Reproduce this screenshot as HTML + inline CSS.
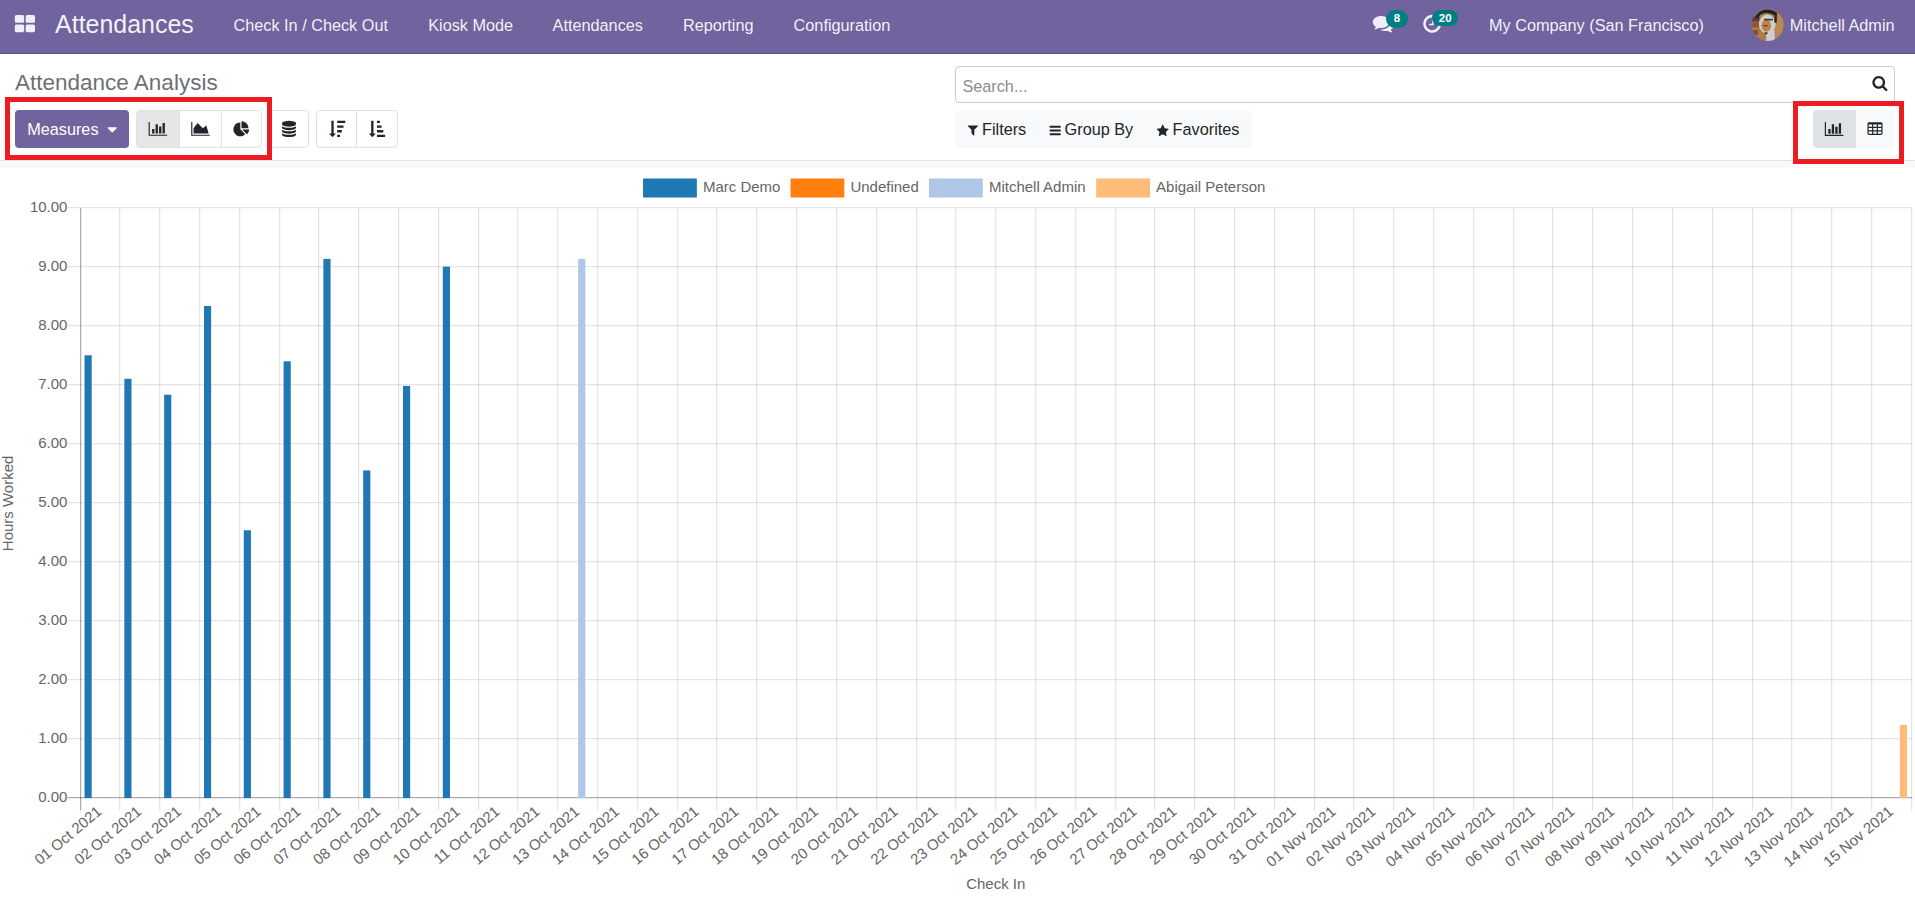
<!DOCTYPE html>
<html lang="en"><head><meta charset="utf-8"><title>Attendance Analysis</title>
<style>
html,body{margin:0;padding:0;}
body{width:1915px;height:897px;overflow:hidden;position:relative;background:#fff;font-family:"Liberation Sans",Arial,sans-serif;font-size:16.25px;color:#212529;}
.abs{position:absolute;white-space:nowrap;}
.nav{left:0;top:0;width:1915px;height:52.6px;background:#71639e;border-bottom:1.2px solid #5a4f82;}
.nav .t{position:absolute;top:0;height:50px;line-height:50px;color:rgba(255,255,255,0.93);white-space:nowrap;}
.brand{font-size:24.9px;}
.badge{position:absolute;background:#017e84;color:#fff;font-weight:bold;font-size:11.5px;text-align:center;border-radius:9px;line-height:17px;height:17px;}
svg.chart,svg.icons{position:absolute;left:0;top:0;}
.badge{z-index:5;}
svg .tick, svg .tick text{font-family:"Liberation Sans",Arial,sans-serif;font-size:15px;fill:#666;}
.btn{position:absolute;box-sizing:border-box;border:1px solid #dee2e6;background:#fff;}
.red{position:absolute;box-sizing:border-box;border:5px solid #ed1c24;}
</style></head><body>
<div class="abs nav">
  <span class="t brand" style="left:55.1px;top:-0.6px;font-size:24.95px">Attendances</span>
  <span class="t" style="left:233.5px">Check In / Check Out</span>
  <span class="t" style="left:428.2px">Kiosk Mode</span>
  <span class="t" style="left:552.6px">Attendances</span>
  <span class="t" style="left:683.0px">Reporting</span>
  <span class="t" style="left:793.6px">Configuration</span>
  <span class="t" style="left:1489px">My Company (San Francisco)</span>
  <span class="t" style="left:1789.8px">Mitchell Admin</span>
</div>
<svg class="abs" style="left:1751px;top:8.4px" width="33" height="33" viewBox="0 0 33 33">
 <defs><clipPath id="av"><circle cx="16.5" cy="16.85" r="16.05"/></clipPath></defs>
 <g clip-path="url(#av)">
  <rect width="33" height="33" fill="#b07c45"/>
  <rect x="0" y="8.5" width="8.5" height="5" fill="#5e3b35"/>
  <rect x="0" y="13.5" width="8" height="6" fill="#8a5a38"/>
  <rect x="1" y="22" width="6" height="5" fill="#7d5438"/>
  <rect x="24.5" y="6" width="9" height="24" fill="#bb8950"/>
  <ellipse cx="16.3" cy="16.2" rx="8.3" ry="9.6" fill="#cfcfd0"/>
  <ellipse cx="15.3" cy="17.6" rx="4.8" ry="6.2" fill="#bd8449"/>
  <rect x="13" y="10.8" width="9" height="1.6" fill="#4b3030"/>
  <rect x="12.5" y="17" width="4" height="1.3" fill="#5e3b35"/>
  <path d="M4 9.5 Q6 3.5 14 1.6 Q22 0.8 26 5 L25.6 15 L23.2 14.2 L23.6 7.5 Q19 4.2 13 5.2 Q8.5 6 7.5 10.5 Z" fill="#20232a"/>
  <path d="M15.2 24.4 L23.5 21.5 L24 33 L15.2 33 Z" fill="#cdcdcf"/>
  <rect x="13.5" y="24.2" width="3" height="2" fill="#5e3b35"/>
 </g>
</svg>
<div class="badge" style="left:1386.2px;top:10.1px;width:21.7px;height:17.6px;line-height:17.8px">8</div>
<div class="badge" style="left:1432.4px;top:9.8px;width:25.6px;line-height:16.6px;height:16.6px">20</div>

<div class="abs" style="left:15px;top:67.9px;font-size:22.5px;color:#6c7075;line-height:30px;">Attendance Analysis</div>

<div class="abs" style="left:15px;top:110.2px;width:114px;height:37.4px;background:#71639e;border-radius:4px;"></div>
<div class="abs" style="left:27.2px;top:110.9px;line-height:37.4px;color:#fff;">Measures</div>

<div class="btn" style="left:136px;top:110.2px;width:126px;height:37.4px;border-radius:4px;"></div>
<div class="abs" style="left:137px;top:111.2px;width:42.5px;height:35.4px;background:#e6e6e6;border-radius:3px 0 0 3px;"></div>
<div class="abs" style="left:179.3px;top:110.2px;width:1px;height:37.4px;background:#dee2e6;"></div>
<div class="abs" style="left:221.2px;top:110.2px;width:1px;height:37.4px;background:#dee2e6;"></div>
<div class="btn" style="left:266.5px;top:110.2px;width:42.3px;height:37.4px;border-radius:4px;"></div>
<div class="btn" style="left:316.2px;top:110.2px;width:81.8px;height:37.4px;border-radius:4px;"></div>
<div class="abs" style="left:356.3px;top:110.2px;width:1px;height:37.4px;background:#dee2e6;"></div>

<div class="abs" style="left:955px;top:66px;width:940px;height:37px;box-sizing:border-box;border:1px solid #cccccc;border-radius:4px;"></div>
<div class="abs" style="left:962.4px;top:67px;line-height:38px;color:#8a8d91;">Search...</div>

<div class="abs" style="left:955.2px;top:109.9px;width:296.8px;height:37.9px;background:#f8f9fa;border-radius:4px;"></div>
<div class="abs" style="left:982.0px;top:110.2px;line-height:38px;">Filters</div>
<div class="abs" style="left:1064.6px;top:110.2px;line-height:38px;">Group By</div>
<div class="abs" style="left:1172.6px;top:110.2px;line-height:38px;">Favorites</div>

<div class="abs" style="left:1813.1px;top:110.2px;width:42.8px;height:37.6px;background:#dee2e6;border-radius:4px 0 0 4px;"></div>
<div class="abs" style="left:1855.9px;top:110.2px;width:39.2px;height:37.6px;background:#f8f9fa;border-radius:0 4px 4px 0;"></div>

<div class="abs" style="left:0;top:160px;width:1915px;height:1px;background:#e1e5e9;"></div>
<div class="abs" style="left:0;top:161px;width:1915px;height:6.9px;background:#f9f9f9;"></div>

<svg class="chart" width="1915" height="897" viewBox="0 0 1915 897">
<g fill="rgba(0,0,0,0.1)"><rect x="67.64" y="207" width="1844.61" height="1.25"/><rect x="67.64" y="266" width="1844.61" height="1.25"/><rect x="67.64" y="325" width="1844.61" height="1.25"/><rect x="67.64" y="384" width="1844.61" height="1.25"/><rect x="67.64" y="443" width="1844.61" height="1.25"/><rect x="67.64" y="502" width="1844.61" height="1.25"/><rect x="67.64" y="561" width="1844.61" height="1.25"/><rect x="67.64" y="620" width="1844.61" height="1.25"/><rect x="67.64" y="679" width="1844.61" height="1.25"/><rect x="67.64" y="738" width="1844.61" height="1.25"/><rect x="119" y="208" width="1.25" height="602.50"/><rect x="159" y="208" width="1.25" height="602.50"/><rect x="199" y="208" width="1.25" height="602.50"/><rect x="239" y="208" width="1.25" height="602.50"/><rect x="279" y="208" width="1.25" height="602.50"/><rect x="318" y="208" width="1.25" height="602.50"/><rect x="358" y="208" width="1.25" height="602.50"/><rect x="398" y="208" width="1.25" height="602.50"/><rect x="438" y="208" width="1.25" height="602.50"/><rect x="478" y="208" width="1.25" height="602.50"/><rect x="517" y="208" width="1.25" height="602.50"/><rect x="557" y="208" width="1.25" height="602.50"/><rect x="597" y="208" width="1.25" height="602.50"/><rect x="637" y="208" width="1.25" height="602.50"/><rect x="677" y="208" width="1.25" height="602.50"/><rect x="716" y="208" width="1.25" height="602.50"/><rect x="756" y="208" width="1.25" height="602.50"/><rect x="796" y="208" width="1.25" height="602.50"/><rect x="836" y="208" width="1.25" height="602.50"/><rect x="876" y="208" width="1.25" height="602.50"/><rect x="916" y="208" width="1.25" height="602.50"/><rect x="955" y="208" width="1.25" height="602.50"/><rect x="995" y="208" width="1.25" height="602.50"/><rect x="1035" y="208" width="1.25" height="602.50"/><rect x="1075" y="208" width="1.25" height="602.50"/><rect x="1115" y="208" width="1.25" height="602.50"/><rect x="1154" y="208" width="1.25" height="602.50"/><rect x="1194" y="208" width="1.25" height="602.50"/><rect x="1234" y="208" width="1.25" height="602.50"/><rect x="1274" y="208" width="1.25" height="602.50"/><rect x="1314" y="208" width="1.25" height="602.50"/><rect x="1353" y="208" width="1.25" height="602.50"/><rect x="1393" y="208" width="1.25" height="602.50"/><rect x="1433" y="208" width="1.25" height="602.50"/><rect x="1473" y="208" width="1.25" height="602.50"/><rect x="1513" y="208" width="1.25" height="602.50"/><rect x="1552" y="208" width="1.25" height="602.50"/><rect x="1592" y="208" width="1.25" height="602.50"/><rect x="1632" y="208" width="1.25" height="602.50"/><rect x="1672" y="208" width="1.25" height="602.50"/><rect x="1712" y="208" width="1.25" height="602.50"/><rect x="1752" y="208" width="1.25" height="602.50"/><rect x="1791" y="208" width="1.25" height="602.50"/><rect x="1831" y="208" width="1.25" height="602.50"/><rect x="1871" y="208" width="1.25" height="602.50"/><rect x="1911" y="208" width="1.25" height="602.50"/></g>
<g fill="rgba(0,0,0,0.32)"><rect x="80" y="208" width="1.25" height="602.50"/><rect x="67.64" y="797" width="1844.61" height="1.25"/></g>
<rect x="84.52" y="355.30" width="7.17" height="442.81" fill="#1f77b4"/>
<rect x="124.33" y="378.78" width="7.17" height="419.32" fill="#1f77b4"/>
<rect x="164.14" y="394.71" width="7.17" height="403.39" fill="#1f77b4"/>
<rect x="203.95" y="306.03" width="7.17" height="492.07" fill="#1f77b4"/>
<rect x="243.76" y="530.29" width="7.17" height="267.81" fill="#1f77b4"/>
<rect x="283.57" y="361.31" width="7.17" height="436.79" fill="#1f77b4"/>
<rect x="323.38" y="258.89" width="7.17" height="539.21" fill="#1f77b4"/>
<rect x="363.19" y="470.40" width="7.17" height="327.70" fill="#1f77b4"/>
<rect x="403.00" y="385.92" width="7.17" height="412.18" fill="#1f77b4"/>
<rect x="442.81" y="266.68" width="7.17" height="531.42" fill="#1f77b4"/>
<rect x="578.17" y="258.89" width="7.17" height="539.21" fill="#aec7e8"/>
<rect x="1899.86" y="724.99" width="7.17" height="73.11" fill="#ffbb78"/>
<g class="tick" text-anchor="end">
<text x="67.44" y="211.60">10.00</text>
<text x="67.44" y="270.60">9.00</text>
<text x="67.44" y="329.60">8.00</text>
<text x="67.44" y="388.60">7.00</text>
<text x="67.44" y="447.60">6.00</text>
<text x="67.44" y="506.60">5.00</text>
<text x="67.44" y="565.60">4.00</text>
<text x="67.44" y="624.60">3.00</text>
<text x="67.44" y="683.60">2.00</text>
<text x="67.44" y="742.60">1.00</text>
<text x="67.44" y="801.60">0.00</text>
</g>
<g class="tick" text-anchor="end">
<text transform="translate(100.05 810.00) rotate(-39.85)" x="0" y="4.1">01 Oct 2021</text>
<text transform="translate(139.86 810.00) rotate(-39.85)" x="0" y="4.1">02 Oct 2021</text>
<text transform="translate(179.67 810.00) rotate(-39.85)" x="0" y="4.1">03 Oct 2021</text>
<text transform="translate(219.48 810.00) rotate(-39.85)" x="0" y="4.1">04 Oct 2021</text>
<text transform="translate(259.29 810.00) rotate(-39.85)" x="0" y="4.1">05 Oct 2021</text>
<text transform="translate(299.10 810.00) rotate(-39.85)" x="0" y="4.1">06 Oct 2021</text>
<text transform="translate(338.91 810.00) rotate(-39.85)" x="0" y="4.1">07 Oct 2021</text>
<text transform="translate(378.72 810.00) rotate(-39.85)" x="0" y="4.1">08 Oct 2021</text>
<text transform="translate(418.53 810.00) rotate(-39.85)" x="0" y="4.1">09 Oct 2021</text>
<text transform="translate(458.34 810.00) rotate(-39.85)" x="0" y="4.1">10 Oct 2021</text>
<text transform="translate(498.15 810.00) rotate(-39.85)" x="0" y="4.1">11 Oct 2021</text>
<text transform="translate(537.96 810.00) rotate(-39.85)" x="0" y="4.1">12 Oct 2021</text>
<text transform="translate(577.77 810.00) rotate(-39.85)" x="0" y="4.1">13 Oct 2021</text>
<text transform="translate(617.58 810.00) rotate(-39.85)" x="0" y="4.1">14 Oct 2021</text>
<text transform="translate(657.39 810.00) rotate(-39.85)" x="0" y="4.1">15 Oct 2021</text>
<text transform="translate(697.20 810.00) rotate(-39.85)" x="0" y="4.1">16 Oct 2021</text>
<text transform="translate(737.01 810.00) rotate(-39.85)" x="0" y="4.1">17 Oct 2021</text>
<text transform="translate(776.82 810.00) rotate(-39.85)" x="0" y="4.1">18 Oct 2021</text>
<text transform="translate(816.63 810.00) rotate(-39.85)" x="0" y="4.1">19 Oct 2021</text>
<text transform="translate(856.44 810.00) rotate(-39.85)" x="0" y="4.1">20 Oct 2021</text>
<text transform="translate(896.25 810.00) rotate(-39.85)" x="0" y="4.1">21 Oct 2021</text>
<text transform="translate(936.06 810.00) rotate(-39.85)" x="0" y="4.1">22 Oct 2021</text>
<text transform="translate(975.87 810.00) rotate(-39.85)" x="0" y="4.1">23 Oct 2021</text>
<text transform="translate(1015.68 810.00) rotate(-39.85)" x="0" y="4.1">24 Oct 2021</text>
<text transform="translate(1055.49 810.00) rotate(-39.85)" x="0" y="4.1">25 Oct 2021</text>
<text transform="translate(1095.30 810.00) rotate(-39.85)" x="0" y="4.1">26 Oct 2021</text>
<text transform="translate(1135.11 810.00) rotate(-39.85)" x="0" y="4.1">27 Oct 2021</text>
<text transform="translate(1174.92 810.00) rotate(-39.85)" x="0" y="4.1">28 Oct 2021</text>
<text transform="translate(1214.73 810.00) rotate(-39.85)" x="0" y="4.1">29 Oct 2021</text>
<text transform="translate(1254.54 810.00) rotate(-39.85)" x="0" y="4.1">30 Oct 2021</text>
<text transform="translate(1294.35 810.00) rotate(-39.85)" x="0" y="4.1">31 Oct 2021</text>
<text transform="translate(1334.16 810.00) rotate(-39.85)" x="0" y="4.1">01 Nov 2021</text>
<text transform="translate(1373.97 810.00) rotate(-39.85)" x="0" y="4.1">02 Nov 2021</text>
<text transform="translate(1413.78 810.00) rotate(-39.85)" x="0" y="4.1">03 Nov 2021</text>
<text transform="translate(1453.59 810.00) rotate(-39.85)" x="0" y="4.1">04 Nov 2021</text>
<text transform="translate(1493.40 810.00) rotate(-39.85)" x="0" y="4.1">05 Nov 2021</text>
<text transform="translate(1533.21 810.00) rotate(-39.85)" x="0" y="4.1">06 Nov 2021</text>
<text transform="translate(1573.02 810.00) rotate(-39.85)" x="0" y="4.1">07 Nov 2021</text>
<text transform="translate(1612.83 810.00) rotate(-39.85)" x="0" y="4.1">08 Nov 2021</text>
<text transform="translate(1652.64 810.00) rotate(-39.85)" x="0" y="4.1">09 Nov 2021</text>
<text transform="translate(1692.45 810.00) rotate(-39.85)" x="0" y="4.1">10 Nov 2021</text>
<text transform="translate(1732.26 810.00) rotate(-39.85)" x="0" y="4.1">11 Nov 2021</text>
<text transform="translate(1772.07 810.00) rotate(-39.85)" x="0" y="4.1">12 Nov 2021</text>
<text transform="translate(1811.88 810.00) rotate(-39.85)" x="0" y="4.1">13 Nov 2021</text>
<text transform="translate(1851.69 810.00) rotate(-39.85)" x="0" y="4.1">14 Nov 2021</text>
<text transform="translate(1891.50 810.00) rotate(-39.85)" x="0" y="4.1">15 Nov 2021</text>
</g>
<text class="tick" text-anchor="middle" x="995.78" y="888.9">Check In</text>
<text class="tick" text-anchor="middle" transform="translate(12.6 503.40) rotate(-90)">Hours Worked</text>
<rect x="643.05" y="178.5" width="53.8" height="19" fill="#1f77b4"/>
<text class="tick" x="702.95" y="192">Marc Demo</text>
<rect x="790.50" y="178.5" width="53.8" height="19" fill="#ff7f0e"/>
<text class="tick" x="850.40" y="192">Undefined</text>
<rect x="929.00" y="178.5" width="53.8" height="19" fill="#aec7e8"/>
<text class="tick" x="988.90" y="192">Mitchell Admin</text>
<rect x="1096.20" y="178.5" width="53.8" height="19" fill="#ffbb78"/>
<text class="tick" x="1156.10" y="192">Abigail Peterson</text>
</svg>
<svg class="icons" width="1915" height="897" viewBox="0 0 1915 897"><path transform="translate(14.80 32.19) scale(0.01214 -0.01214)" fill="#f0eff5" d="M768 512v-384q0 -52 -38 -90t-90 -38h-512q-52 0 -90 38t-38 90v384q0 52 38 90t90 38h512q52 0 90 -38t38 -90zM768 1280v-384q0 -52 -38 -90t-90 -38h-512q-52 0 -90 38t-38 90v384q0 52 38 90t90 38h512q52 0 90 -38t38 -90zM1664 512v-384q0 -52 -38 -90t-90 -38 h-512q-52 0 -90 38t-38 90v384q0 52 38 90t90 38h512q52 0 90 -38t38 -90zM1664 1280v-384q0 -52 -38 -90t-90 -38h-512q-52 0 -90 38t-38 90v384q0 52 38 90t90 38h512q52 0 90 -38t38 -90z"/>
<path transform="translate(1372.80 31.05) scale(0.01172 -0.01172)" fill="#f0eff5" d="M1408 768q0 -139 -94 -257t-256.5 -186.5t-353.5 -68.5q-86 0 -176 16q-124 -88 -278 -128q-36 -9 -86 -16h-3q-11 0 -20.5 8t-11.5 21q-1 3 -1 6.5t0.5 6.5t2 6l2.5 5t3.5 5.5t4 5t4.5 5t4 4.5q5 6 23 25t26 29.5t22.5 29t25 38.5t20.5 44q-124 72 -195 177t-71 224 q0 139 94 257t256.5 186.5t353.5 68.5t353.5 -68.5t256.5 -186.5t94 -257zM1792 512q0 -120 -71 -224.5t-195 -176.5q10 -24 20.5 -44t25 -38.5t22.5 -29t26 -29.5t23 -25q1 -1 4 -4.5t4.5 -5t4 -5t3.5 -5.5l2.5 -5t2 -6t0.5 -6.5t-1 -6.5q-3 -14 -13 -22t-22 -7 q-50 7 -86 16q-154 40 -278 128q-90 -16 -176 -16q-271 0 -472 132q58 -4 88 -4q161 0 309 45t264 129q125 92 192 212t67 254q0 77 -23 152q129 -71 204 -178t75 -230z"/>
<path transform="translate(1423.20 31.30) scale(0.01172 -0.01172)" fill="#f0eff5" d="M896 992v-448q0 -14 -9 -23t-23 -9h-320q-14 0 -23 9t-9 23v64q0 14 9 23t23 9h224v352q0 14 9 23t23 9h64q14 0 23 -9t9 -23zM1312 640q0 148 -73 273t-198 198t-273 73t-273 -73t-198 -198t-73 -273t73 -273t198 -198t273 -73t273 73t198 198t73 273zM1536 640 q0 -209 -103 -385.5t-279.5 -279.5t-385.5 -103t-385.5 103t-279.5 279.5t-103 385.5t103 385.5t279.5 279.5t385.5 103t385.5 -103t279.5 -279.5t103 -385.5z"/>
<path transform="translate(148.61 134.70) scale(0.00907 -0.00907)" fill="#212529" d="M640 640v-512h-256v512h256zM1024 1152v-1024h-256v1024h256zM2048 0v-128h-2048v1536h128v-1408h1920zM1408 896v-768h-256v768h256zM1792 1280v-1152h-256v1152h256z"/>
<path transform="translate(191.21 134.70) scale(0.00907 -0.00907)" fill="#212529" d="M2048 0v-128h-2048v1536h128v-1408h1920zM1664 1024l256 -896h-1664v576l448 576l576 -576z"/>
<path transform="translate(233.37 135.18) scale(0.00907 -0.00907)" fill="#212529" d="M768 646l546 -546q-106 -108 -247.5 -168t-298.5 -60q-209 0 -385.5 103t-279.5 279.5t-103 385.5t103 385.5t279.5 279.5t385.5 103v-762zM955 640h773q0 -157 -60 -298.5t-168 -247.5zM1664 768h-768v768q209 0 385.5 -103t279.5 -279.5t103 -385.5z"/>
<path transform="translate(282.04 134.80) scale(0.00907 -0.00907)" fill="#212529" d="M768 768q237 0 443 43t325 127v-170q0 -69 -103 -128t-280 -93.5t-385 -34.5t-385 34.5t-280 93.5t-103 128v170q119 -84 325 -127t443 -43zM768 0q237 0 443 43t325 127v-170q0 -69 -103 -128t-280 -93.5t-385 -34.5t-385 34.5t-280 93.5t-103 128v170q119 -84 325 -127 t443 -43zM768 384q237 0 443 43t325 127v-170q0 -69 -103 -128t-280 -93.5t-385 -34.5t-385 34.5t-280 93.5t-103 128v170q119 -84 325 -127t443 -43zM768 1536q208 0 385 -34.5t280 -93.5t103 -128v-128q0 -69 -103 -128t-280 -93.5t-385 -34.5t-385 34.5t-280 93.5 t-103 128v128q0 69 103 128t280 93.5t385 34.5z"/>
<path transform="translate(329.03 134.70) scale(0.00907 -0.00907)" fill="#212529" d="M1216 -32v-192q0 -14 -9 -23t-23 -9h-256q-14 0 -23 9t-9 23v192q0 14 9 23t23 9h256q14 0 23 -9t9 -23zM736 96q0 -12 -10 -24l-319 -319q-10 -9 -23 -9q-12 0 -23 9l-320 320q-15 16 -7 35q8 20 30 20h192v1376q0 14 9 23t23 9h192q14 0 23 -9t9 -23v-1376h192 q14 0 23 -9t9 -23zM1408 480v-192q0 -14 -9 -23t-23 -9h-448q-14 0 -23 9t-9 23v192q0 14 9 23t23 9h448q14 0 23 -9t9 -23zM1600 992v-192q0 -14 -9 -23t-23 -9h-640q-14 0 -23 9t-9 23v192q0 14 9 23t23 9h640q14 0 23 -9t9 -23zM1792 1504v-192q0 -14 -9 -23t-23 -9h-832 q-14 0 -23 9t-9 23v192q0 14 9 23t23 9h832q14 0 23 -9t9 -23z"/>
<path transform="translate(368.83 134.70) scale(0.00907 -0.00907)" fill="#212529" d="M736 96q0 -12 -10 -24l-319 -319q-10 -9 -23 -9q-12 0 -23 9l-320 320q-15 16 -7 35q8 20 30 20h192v1376q0 14 9 23t23 9h192q14 0 23 -9t9 -23v-1376h192q14 0 23 -9t9 -23zM1792 -32v-192q0 -14 -9 -23t-23 -9h-832q-14 0 -23 9t-9 23v192q0 14 9 23t23 9h832 q14 0 23 -9t9 -23zM1600 480v-192q0 -14 -9 -23t-23 -9h-640q-14 0 -23 9t-9 23v192q0 14 9 23t23 9h640q14 0 23 -9t9 -23zM1408 992v-192q0 -14 -9 -23t-23 -9h-448q-14 0 -23 9t-9 23v192q0 14 9 23t23 9h448q14 0 23 -9t9 -23zM1216 1504v-192q0 -14 -9 -23t-23 -9h-256 q-14 0 -23 9t-9 23v192q0 14 9 23t23 9h256q14 0 23 -9t9 -23z"/>
<path transform="translate(107.56 135.41) scale(0.00907 -0.00907)" fill="#ffffff" d="M1024 832q0 -26 -19 -45l-448 -448q-19 -19 -45 -19t-45 19l-448 448q-19 19 -19 45t19 45t45 19h896q26 0 45 -19t19 -45z"/>
<path transform="translate(1872.36 88.82) scale(0.00907 -0.00907)" fill="#212529" d="M1152 704q0 185 -131.5 316.5t-316.5 131.5t-316.5 -131.5t-131.5 -316.5t131.5 -316.5t316.5 -131.5t316.5 131.5t131.5 316.5zM1664 -128q0 -52 -38 -90t-90 -38q-54 0 -90 38l-343 342q-179 -124 -399 -124q-143 0 -273.5 55.5t-225 150t-150 225t-55.5 273.5 t55.5 273.5t150 225t225 150t273.5 55.5t273.5 -55.5t225 -150t150 -225t55.5 -273.5q0 -220 -124 -399l343 -343q37 -37 37 -90z"/>
<path transform="translate(967.79 134.68) scale(0.00725 -0.00725)" fill="#212529" d="M1403 1241q17 -41 -14 -70l-493 -493v-742q0 -42 -39 -59q-13 -5 -25 -5q-27 0 -45 19l-256 256q-19 19 -19 45v486l-493 493q-31 29 -14 70q17 39 59 39h1280q42 0 59 -39z"/>
<path transform="translate(1049.63 135.14) scale(0.00725 -0.00725)" fill="#212529" d="M1536 192v-128q0 -26 -19 -45t-45 -19h-1408q-26 0 -45 19t-19 45v128q0 26 19 45t45 19h1408q26 0 45 -19t19 -45zM1536 704v-128q0 -26 -19 -45t-45 -19h-1408q-26 0 -45 19t-19 45v128q0 26 19 45t45 19h1408q26 0 45 -19t19 -45zM1536 1216v-128q0 -26 -19 -45 t-45 -19h-1408q-26 0 -45 19t-19 45v128q0 26 19 45t45 19h1408q26 0 45 -19t19 -45z"/>
<path transform="translate(1156.66 135.45) scale(0.00725 -0.00725)" fill="#212529" d="M1664 889q0 -22 -26 -48l-363 -354l86 -500q1 -7 1 -20q0 -21 -10.5 -35.5t-30.5 -14.5q-19 0 -40 12l-449 236l-449 -236q-22 -12 -40 -12q-21 0 -31.5 14.5t-10.5 35.5q0 6 2 20l86 500l-364 354q-25 27 -25 48q0 37 56 46l502 73l225 455q19 41 49 41t49 -41l225 -455 l502 -73q56 -9 56 -46z"/>
<path transform="translate(1824.81 134.80) scale(0.00907 -0.00907)" fill="#212529" d="M640 640v-512h-256v512h256zM1024 1152v-1024h-256v1024h256zM2048 0v-128h-2048v1536h128v-1408h1920zM1408 896v-768h-256v768h256zM1792 1280v-1152h-256v1152h256z"/>
<path transform="translate(1867.46 134.98) scale(0.00907 -0.00907)" fill="#212529" d="M512 160v192q0 14 -9 23t-23 9h-320q-14 0 -23 -9t-9 -23v-192q0 -14 9 -23t23 -9h320q14 0 23 9t9 23zM512 544v192q0 14 -9 23t-23 9h-320q-14 0 -23 -9t-9 -23v-192q0 -14 9 -23t23 -9h320q14 0 23 9t9 23zM1024 160v192q0 14 -9 23t-23 9h-320q-14 0 -23 -9t-9 -23 v-192q0 -14 9 -23t23 -9h320q14 0 23 9t9 23zM512 928v192q0 14 -9 23t-23 9h-320q-14 0 -23 -9t-9 -23v-192q0 -14 9 -23t23 -9h320q14 0 23 9t9 23zM1024 544v192q0 14 -9 23t-23 9h-320q-14 0 -23 -9t-9 -23v-192q0 -14 9 -23t23 -9h320q14 0 23 9t9 23zM1536 160v192 q0 14 -9 23t-23 9h-320q-14 0 -23 -9t-9 -23v-192q0 -14 9 -23t23 -9h320q14 0 23 9t9 23zM1024 928v192q0 14 -9 23t-23 9h-320q-14 0 -23 -9t-9 -23v-192q0 -14 9 -23t23 -9h320q14 0 23 9t9 23zM1536 544v192q0 14 -9 23t-23 9h-320q-14 0 -23 -9t-9 -23v-192 q0 -14 9 -23t23 -9h320q14 0 23 9t9 23zM1536 928v192q0 14 -9 23t-23 9h-320q-14 0 -23 -9t-9 -23v-192q0 -14 9 -23t23 -9h320q14 0 23 9t9 23zM1664 1248v-1088q0 -66 -47 -113t-113 -47h-1344q-66 0 -113 47t-47 113v1088q0 66 47 113t113 47h1344q66 0 113 -47t47 -113 z"/></svg>
<div class="red" style="left:5px;top:97px;width:267px;height:63px;"></div>
<div class="red" style="left:1793px;top:101px;width:111px;height:63px;"></div>
</body></html>
